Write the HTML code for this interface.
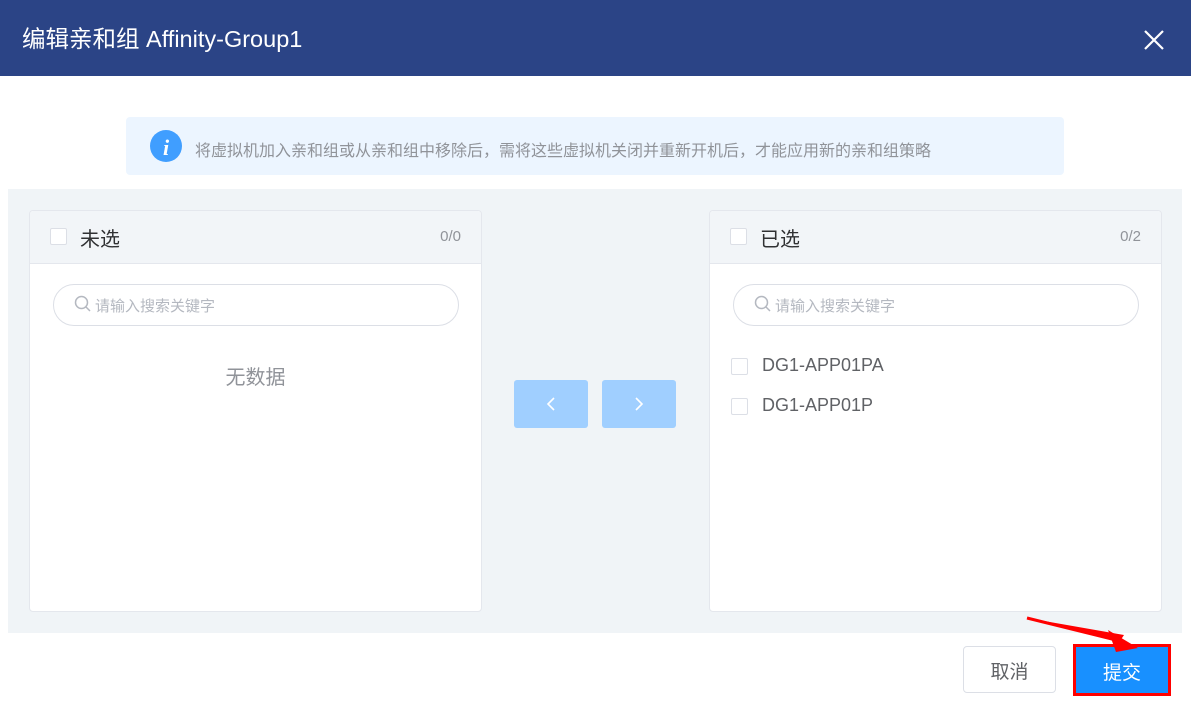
<!DOCTYPE html><html><head><meta charset="utf-8"><style>
*{box-sizing:border-box;margin:0;padding:0}
body{width:1191px;height:712px;background:#fff;font-family:"Liberation Sans","Noto Sans CJK SC",sans-serif;position:relative;overflow:hidden}
.a{position:absolute}
.hd{left:0;top:0;width:1191px;height:76px;background:#2b4486;color:#fff;font-size:23.5px;padding:20px 0 0 22px}
.info{left:126px;top:117px;width:938px;height:58px;background:#ecf5ff;border-radius:4px}
.gray{left:8px;top:189px;width:1174px;height:444px;background:#f0f4f7}
.pn{width:453px;height:402px;top:210px;background:#fff;border:1px solid #e4e7ed;border-radius:4px;overflow:hidden}
.ph{height:53px;background:#f2f5f8;border-bottom:1px solid #e4e7ed;position:relative}
.cb{position:absolute;width:17px;height:17px;border:1px solid #dcdfe6;border-radius:2px;background:#fff}
.ph .t{position:absolute;left:50px;top:12px;font-size:20px;color:#303133}
.ph .n{position:absolute;right:20px;top:17px;font-size:15px;color:#909399}
.sr{position:absolute;left:23px;top:73px;width:406px;height:42px;border:1px solid #dcdfe6;border-radius:21px;font-size:15px;color:#b4b8c0;padding:10px 0 0 41px}
.btn{top:380px;width:74px;height:48px;background:#a0cfff;border-radius:3px}
</style></head><body>
<div class="a hd">编辑亲和组 Affinity-Group1</div>
<svg class="a" style="left:1143px;top:29px" width="22" height="22"><path d="M2 2L20 20M20 2L2 20" stroke="#fff" stroke-width="2.2"/></svg>
<div class="a info"><svg class="a" style="left:23px;top:12px" width="34" height="34"><circle cx="17" cy="17" r="16" fill="#409eff"/><text x="17" y="26" font-family="Liberation Serif" font-style="italic" font-weight="bold" font-size="22" fill="#fff" text-anchor="middle">i</text></svg>
<div class="a" style="left:69px;top:20px;font-size:16px;color:#909399">将虚拟机加入亲和组或从亲和组中移除后，需将这些虚拟机关闭并重新开机后，才能应用新的亲和组策略</div></div>
<div class="a gray"></div>
<div class="a pn" style="left:29px"><div class="ph"><div class="cb" style="left:20px;top:17px"></div><span class="t">未选</span><span class="n">0/0</span></div>
<div class="sr">请输入搜索关键字</div><svg class="a" style="left:44px;top:84px" width="18" height="18"><circle cx="7.5" cy="7.5" r="6" fill="none" stroke="#b4b8c0" stroke-width="1.5"/><path d="M12 12L16 16" stroke="#b4b8c0" stroke-width="1.5"/></svg>
<div class="a" style="left:0;width:451px;text-align:center;top:150px;font-size:20px;color:#909399">无数据</div></div>
<div class="a btn" style="left:514px"><svg width="74" height="48"><path d="M40 18L34 24L40 30" fill="none" stroke="#fff" stroke-width="1.6"/></svg></div>
<div class="a btn" style="left:602px"><svg width="74" height="48"><path d="M34 18L40 24L34 30" fill="none" stroke="#fff" stroke-width="1.6"/></svg></div>
<div class="a pn" style="left:709px"><div class="ph"><div class="cb" style="left:20px;top:17px"></div><span class="t">已选</span><span class="n">0/2</span></div>
<div class="sr">请输入搜索关键字</div><svg class="a" style="left:44px;top:84px" width="18" height="18"><circle cx="7.5" cy="7.5" r="6" fill="none" stroke="#b4b8c0" stroke-width="1.5"/><path d="M12 12L16 16" stroke="#b4b8c0" stroke-width="1.5"/></svg>
<div class="cb" style="left:21px;top:147px"></div><div class="a" style="left:52px;top:144px;font-size:18px;color:#606266">DG1-APP01PA</div>
<div class="cb" style="left:21px;top:187px"></div><div class="a" style="left:52px;top:184px;font-size:18px;color:#606266">DG1-APP01P</div></div>
<div class="a" style="left:963px;top:646px;width:93px;height:47px;border:1px solid #dcdfe6;border-radius:4px;font-size:19px;color:#606266;text-align:center;padding-top:10px">取消</div>
<div class="a" style="left:1073px;top:644px;width:98px;height:52px;border:3px solid #f00;background:#1890ff;font-size:19px;color:#fff;text-align:center;padding-top:11px">提交</div>
<svg class="a" style="left:1020px;top:610px" width="120" height="45"><path d="M7 8L100 31L104 25Z" fill="#f00"/><path d="M7 8L100 31" stroke="#f00" stroke-width="3"/><path d="M88 20L118 38L96 42Z" fill="#f00"/></svg>
</body></html>
